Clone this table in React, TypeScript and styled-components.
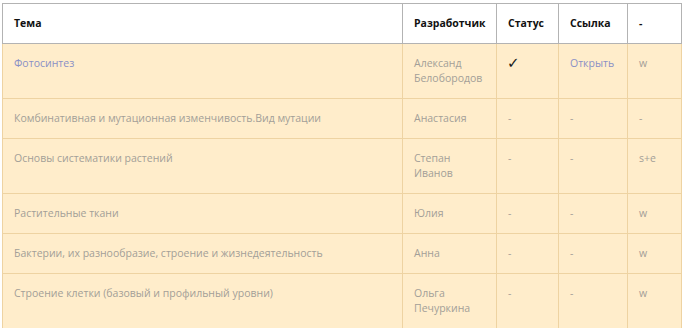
import React from "react";
import styled, { createGlobalStyle } from "styled-components";

const Global = createGlobalStyle`
  html, body { margin: 0; padding: 0; background: #ffffff; }
  body { font-family: "Open Sans", "Noto Sans", sans-serif; }
`;

const Wrap = styled.div`
  padding: 3px 0 0 2px;
`;

const Table = styled.table`
  border-collapse: collapse;
  table-layout: fixed;
  width: 679px;
`;

const Col = styled.col<{ $w: number }>`
  width: ${(p) => p.$w}px;
`;

const HeadCell = styled.th`
  text-align: left;
  font-weight: 700;
  font-size: 10.5px;
  line-height: 15px;
  color: #111;
  padding: 12px 11px 12px 11px;
  border: 1px solid #b3b3b3;
  background: #ffffff;
`;

const Row = styled.tr`
  background: #ffedcb;
`;

const Cell = styled.td<{ $tone?: "link" | "plain" }>`
  vertical-align: top;
  text-align: left;
  font-weight: 400;
  font-size: 10.5px;
  line-height: 15px;
  color: ${(p) => (p.$tone === "link" ? "#8a90c6" : "#a39f98")};
  padding: 12px 11px 12px 11px;
  border: 1px solid #eed3a2;
`;

const Check = styled.span`
  display: inline-block;
  margin-left: -1px;
  font-family: "DejaVu Sans", sans-serif;
  font-size: 15px;
  font-weight: 700;
  line-height: 15px;
  color: #1a1a1a;
`;

type R = {
  topic: string;
  dev: string[];
  status: "done" | "-";
  link: string;
  extra: string;
  topicLink?: boolean;
};

const rows: R[] = [
  { topic: "Фотосинтез", dev: ["Александ", "Белобородов"], status: "done", link: "Открыть", extra: "w", topicLink: true },
  { topic: "Комбинативная и мутационная изменчивость.Вид мутации", dev: ["Анастасия"], status: "-", link: "-", extra: "-" },
  { topic: "Основы систематики растений", dev: ["Степан", "Иванов"], status: "-", link: "-", extra: "s+e" },
  { topic: "Растительные ткани", dev: ["Юлия"], status: "-", link: "-", extra: "w" },
  { topic: "Бактерии, их разнообразие, строение и жизнедеятельность", dev: ["Анна"], status: "-", link: "-", extra: "w" },
  { topic: "Строение клетки (базовый и профильный уровни)", dev: ["Ольга", "Печуркина"], status: "-", link: "-", extra: "w" },
];

export default function App() {
  return (
    <>
      <Global />
      <Wrap>
        <Table>
          <colgroup>
            <Col $w={400} />
            <Col $w={94} />
            <Col $w={62} />
            <Col $w={69} />
            <Col $w={54} />
          </colgroup>
          <thead>
            <tr>
              <HeadCell>Тема</HeadCell>
              <HeadCell>Разработчик</HeadCell>
              <HeadCell>Статус</HeadCell>
              <HeadCell>Ссылка</HeadCell>
              <HeadCell>-</HeadCell>
            </tr>
          </thead>
          <tbody>
            {rows.map((r, i) => (
              <Row key={i}>
                <Cell $tone={r.topicLink ? "link" : "plain"}>{r.topic}</Cell>
                <Cell>
                  {r.dev.map((d, j) => (
                    <div key={j}>{d}</div>
                  ))}
                </Cell>
                <Cell>{r.status === "done" ? <Check>✓</Check> : "-"}</Cell>
                <Cell $tone={r.link === "-" ? "plain" : "link"}>{r.link}</Cell>
                <Cell>{r.extra}</Cell>
              </Row>
            ))}
          </tbody>
        </Table>
      </Wrap>
    </>
  );
}
